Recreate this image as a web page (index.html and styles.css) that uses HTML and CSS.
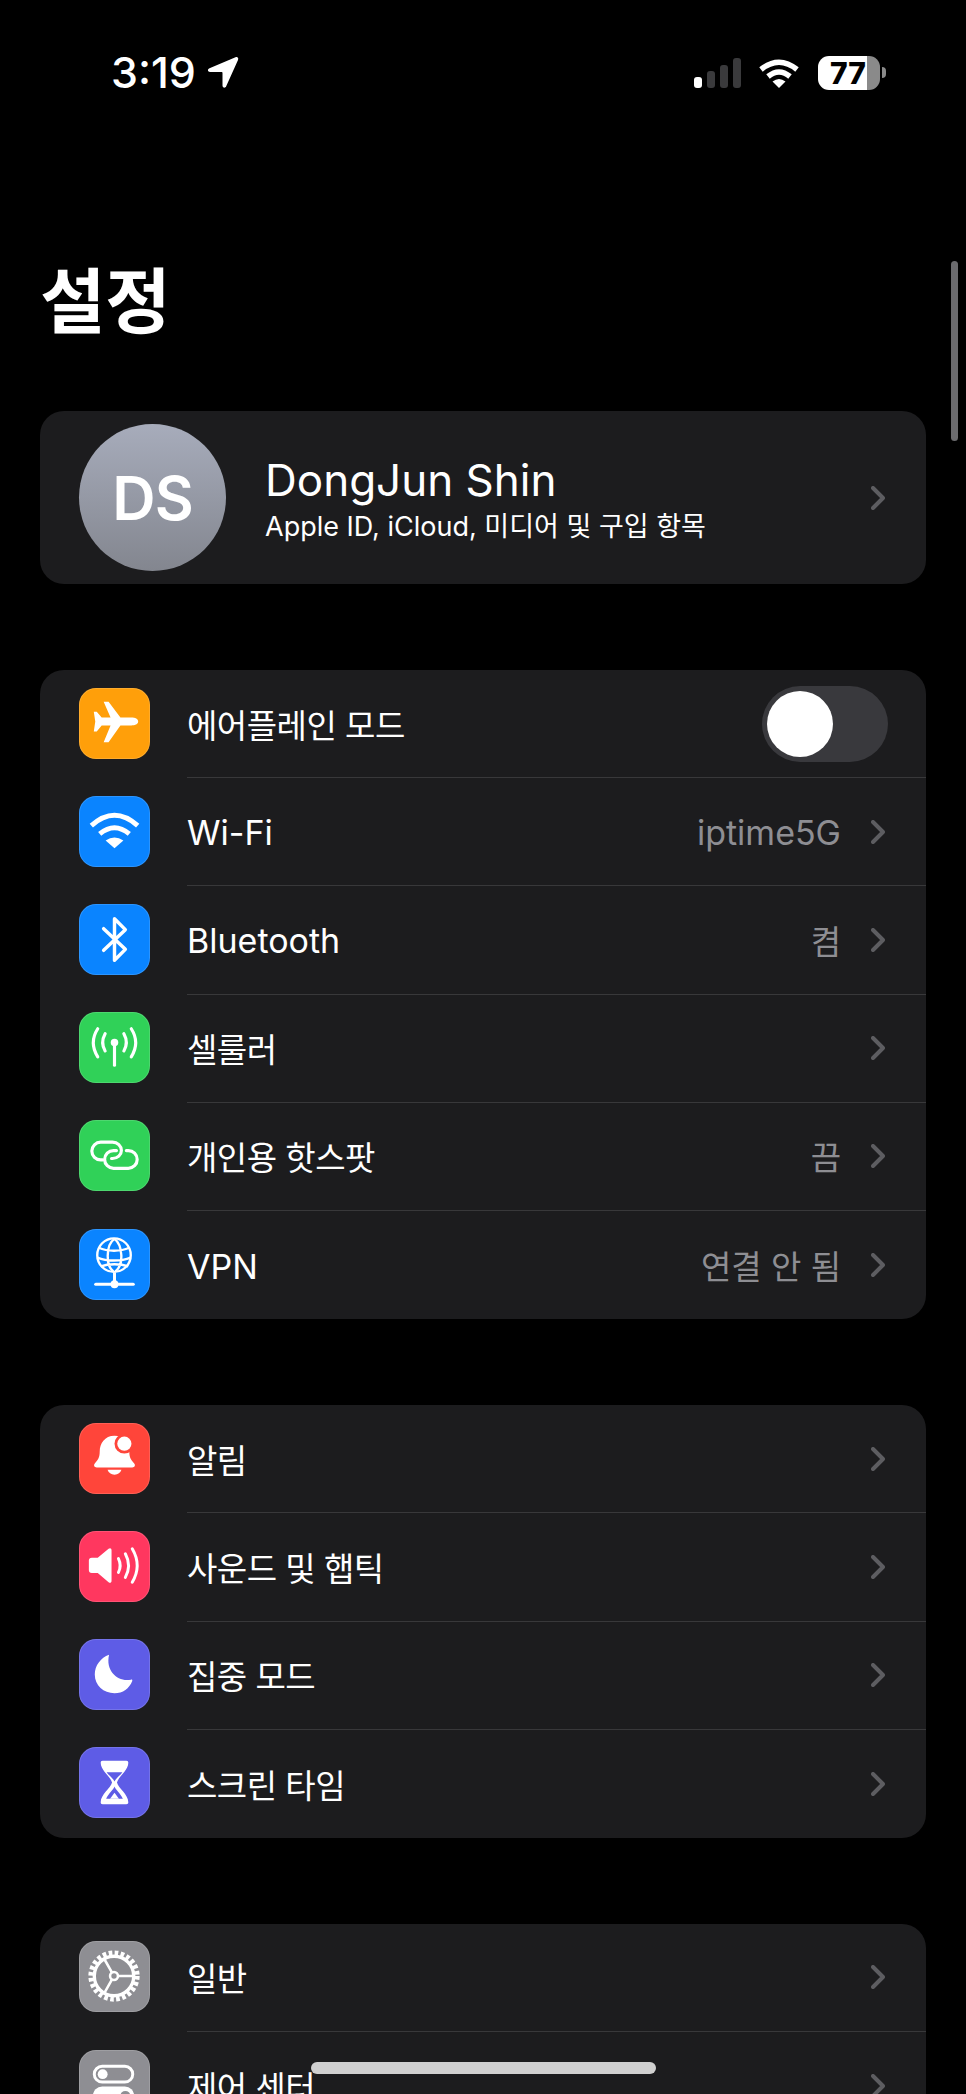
FILE: index.html
```html
<!DOCTYPE html>
<html lang="ko">
<head>
    <meta charset="UTF-8">
    <meta name="viewport" content="width=device-width, initial-scale=1.0">
    <title>설정</title>
    <link rel="stylesheet" href="styles.css">
</head>
<body>
    <div class="status-bar">
        <div class="status-left">
            <span class="time">3:19</span>
            <svg class="location" viewBox="0 0 32 33"><path d="M28.500 1.200 2.500 12.300c-2.400 1-1.800 3.700.5 3.700H14.500c.7 0 1 .3 1 1V29.500c0 2.400 2.700 3 3.700.7L31 4c.9-2-.6-3.600-2.500-2.800z" fill="#fff"/></svg>
        </div>
        <div class="status-right">
            <div class="signal">
                <span class="sig sig-1"></span>
                <span class="sig sig-2"></span>
                <span class="sig sig-3"></span>
                <span class="sig sig-4"></span>
            </div>
            <svg class="status-wifi" viewBox="0 0 42 30">
                <path d="M3 11.500Q21-3 39 11.500" fill="none" stroke="#fff" stroke-width="5.500"/>
                <path d="M10 18.500Q21 9.500 32 18.500" fill="none" stroke="#fff" stroke-width="5.500"/>
                <path d="M14.500 23.500Q21 18.500 27.500 23.500L21 30z" fill="#fff"/>
            </svg>
            <div class="battery"><span class="battery-text">77</span></div>
            <span class="battery-tip"></span>
        </div>
    </div>

    <h1 class="title">설정</h1>

    <div class="card profile">
        <div class="avatar">DS</div>
        <div class="profile-text">
            <div class="profile-name">DongJun Shin</div>
            <div class="profile-sub">Apple ID, iCloud, 미디어 및 구입 항목</div>
        </div>
        <svg class="chevron" viewBox="0 0 14 24"><path d="M2 2l10 10L2 22"/></svg>
    </div>

    <div class="card">
        <div class="row">
            <div class="icon orange">
                <svg viewBox="0 0 72 72"><path d="M60 34c0 2.500-3 4-7 4H42L30 55h-5l7-17h-9l-5 6h-3l1.500-10L15 24h3l5 6h9l-7-16h5l12 16h11c4 0 7 1.500 7 4z" fill="#fff"/></svg>
            </div>
            <div class="row-body">
                <span class="label ko">에어플레인 모드</span>
                <div class="toggle"><span class="knob"></span></div>
            </div>
        </div>
        <div class="row">
            <div class="icon blue">
                <svg viewBox="0 0 72 72" fill="none" stroke="#fff" stroke-width="5"><path d="M12.500 30Q36 9 59.500 30"/><path d="M21 38.500Q36 26 51 38.500"/><path d="M27 45Q36 39 45 45L36 53z" fill="#fff" stroke="none"/></svg>
            </div>
            <div class="row-body">
                <span class="label">Wi-Fi</span>
                <span class="value">iptime5G</span>
                <svg class="chevron" viewBox="0 0 14 24"><path d="M2 2l10 10L2 22"/></svg>
            </div>
        </div>
        <div class="row">
            <div class="icon blue">
                <svg viewBox="0 0 72 72" fill="none" stroke="#fff" stroke-width="3.500" stroke-linejoin="round" stroke-linecap="round"><path d="M25 25l22 21-11 11V15l11 11-22 21"/></svg>
            </div>
            <div class="row-body">
                <span class="label">Bluetooth</span>
                <span class="value ko">켬</span>
                <svg class="chevron" viewBox="0 0 14 24"><path d="M2 2l10 10L2 22"/></svg>
            </div>
        </div>
        <div class="row">
            <div class="icon green">
                <svg viewBox="0 0 72 72" fill="none" stroke="#fff" stroke-width="3.200" stroke-linecap="round"><circle cx="36" cy="31" r="3.800" fill="#fff" stroke="none"/><path d="M36 33v21"/><path d="M26.500 22q-5 9 0 17.500"/><path d="M45.500 22q5 9 0 17.500"/><path d="M19 17q-9 14 0 28.500"/><path d="M53 17q9 14 0 28.500"/></svg>
            </div>
            <div class="row-body">
                <span class="label ko">셀룰러</span>
                <svg class="chevron" viewBox="0 0 14 24"><path d="M2 2l10 10L2 22"/></svg>
            </div>
        </div>
        <div class="row">
            <div class="icon green">
                <svg viewBox="0 0 72 72" fill="none" stroke="#fff" stroke-width="3.200" stroke-linecap="round"><path d="M24 40.500h-2a9 9 0 0 1 0-18h12c5 0 9 4 9 8.500s-4 8-9 8h-1"/><path d="M48 31h2a9 9 0 0 1 0 18H35c-5 0-9-4-9-9s4-9 9-9h3"/></svg>
            </div>
            <div class="row-body">
                <span class="label ko">개인용 핫스팟</span>
                <span class="value ko">끔</span>
                <svg class="chevron" viewBox="0 0 14 24"><path d="M2 2l10 10L2 22"/></svg>
            </div>
        </div>
        <div class="row">
            <div class="icon blue">
                <svg viewBox="0 0 72 72" fill="none" stroke="#fff" stroke-width="2.400"><circle cx="35.500" cy="26.500" r="17"/><path d="M36 10c-9 6-9 28-1 33M36 10c8 6 10 26 1 33M20 19c9 4 22 4 31 0M18.500 29c10 4 24 4 34 0M22 38c8-3 20-3 28 0"/><path d="M36 44v12" stroke-width="3"/><path d="M17 56h38" stroke-width="3.200" stroke-linecap="round"/><circle cx="36" cy="56" r="4" fill="#fff" stroke="none"/></svg>
            </div>
            <div class="row-body">
                <span class="label">VPN</span>
                <span class="value ko">연결 안 됨</span>
                <svg class="chevron" viewBox="0 0 14 24"><path d="M2 2l10 10L2 22"/></svg>
            </div>
        </div>
    </div>

    <div class="card">
        <div class="row">
            <div class="icon red">
                <svg viewBox="0 0 72 72"><path d="M36 13c-10 0-15 8-15 16 0 6-1.500 8-5 12-1.500 1.700-.5 4 2 4h36c2.500 0 3.500-2.300 2-4-3.500-4-5-6-5-12 0-8-5-16-15-16z" fill="#fff"/><path d="M29 47.500h14c-.8 3-3.500 5-7 5s-6.200-2-7-5z" fill="#fff"/><circle cx="46" cy="21" r="10" fill="#ff453a"/><circle cx="46" cy="21" r="7.200" fill="#fff"/></svg>
            </div>
            <div class="row-body">
                <span class="label ko">알림</span>
                <svg class="chevron" viewBox="0 0 14 24"><path d="M2 2l10 10L2 22"/></svg>
            </div>
        </div>
        <div class="row">
            <div class="icon pink">
                <svg viewBox="0 0 72 72"><path d="M13 27h6l11-9c1.500-1.200 3-.5 3 1.500v31c0 2-1.500 2.700-3 1.500l-11-9.500h-6c-2 0-3-1-3-3V30c0-2 1-3 3-3z" fill="#fff"/><g fill="none" stroke="#fff" stroke-width="3" stroke-linecap="round"><path d="M40 28q3.500 7 0 14"/><path d="M47 23q6.500 12 0 24"/><path d="M54 18q10 17 0 34"/></g></svg>
            </div>
            <div class="row-body">
                <span class="label ko">사운드 및 햅틱</span>
                <svg class="chevron" viewBox="0 0 14 24"><path d="M2 2l10 10L2 22"/></svg>
            </div>
        </div>
        <div class="row">
            <div class="icon indigo">
                <svg viewBox="0 0 72 72"><path d="M30.500 16C22 19 16 27 16 36c0 11 9 19 20 19 8.500 0 15-5 18-12.500.3-1-.3-1.500-1.300-1.300C40 44 26.500 33 30.500 16z" fill="#fff"/></svg>
            </div>
            <div class="row-body">
                <span class="label ko">집중 모드</span>
                <svg class="chevron" viewBox="0 0 14 24"><path d="M2 2l10 10L2 22"/></svg>
            </div>
        </div>
        <div class="row">
            <div class="icon indigo">
                <svg viewBox="0 0 72 72"><path d="M24 14h24c1.500 0 2 .8 2 2 0 8-10 14-11.500 20C40 42 50 48 50 56c0 1.500-.8 2-2 2H24c-1.500 0-2-.8-2-2 0-8 10-14 11.500-20C32 30 22 24 22 16c0-1.200.5-2 2-2z" fill="#fff"/><path d="M28 25.500h16c-2 3-6.500 6-8 9.500-1.500-3.500-6-6.500-8-9.500z" fill="#5e5ce6"/><path d="M36 40c-1 3-6 7-8.500 12.500h17C42 47 37 43 36 40z" fill="#5e5ce6"/><path d="M36 46.500l-4.500 6h9z" fill="#fff"/></svg>
            </div>
            <div class="row-body">
                <span class="label ko">스크린 타임</span>
                <svg class="chevron" viewBox="0 0 14 24"><path d="M2 2l10 10L2 22"/></svg>
            </div>
        </div>
    </div>

    <div class="card">
        <div class="row">
            <div class="icon gray">
                <svg viewBox="0 0 72 72" fill="none" stroke="#fff"><circle cx="35.500" cy="35.500" r="23.500" stroke-width="5" stroke-dasharray="3.700 2.450"/><circle cx="35.500" cy="35.500" r="20" stroke-width="3.400"/><circle cx="35.500" cy="35.500" r="4" stroke-width="2.600"/><path d="M39.500 35.500h16M33.500 32l-8-14M33.500 39l-8 14" stroke-width="2.600"/></svg>
            </div>
            <div class="row-body">
                <span class="label ko">일반</span>
                <svg class="chevron" viewBox="0 0 14 24"><path d="M2 2l10 10L2 22"/></svg>
            </div>
        </div>
        <div class="row">
            <div class="icon gray">
                <svg viewBox="0 0 72 72"><rect x="15.500" y="16.500" width="39" height="16" rx="8" fill="none" stroke="#fff" stroke-width="3"/><circle cx="24" cy="24.500" r="5" fill="#fff"/><rect x="14" y="37" width="42" height="19" rx="9.500" fill="#fff"/><circle cx="47" cy="46.500" r="5" fill="#8e8e93"/></svg>
            </div>
            <div class="row-body">
                <span class="label ko">제어 센터</span>
                <svg class="chevron" viewBox="0 0 14 24"><path d="M2 2l10 10L2 22"/></svg>
            </div>
        </div>
    </div>

    <div class="scrollbar"></div>
    <div class="home-indicator"></div>
</body>
</html>
```

FILE: styles.css
```css
* {
    box-sizing: border-box;
    margin: 0;
    padding: 0;
}

html, body {
    width: 966px;
    height: 2094px;
    overflow: hidden;
}

body {
    position: relative;
    background-color: #000;
    color: #fff;
    font-family: Inter, 'Noto Sans CJK KR', sans-serif;
}

/* Status bar */
.status-bar {
    display: flex;
    justify-content: space-between;
    align-items: center;
    height: 35px;
    margin-top: 55px;
    padding: 0 80px 0 111px;
}

.status-left {
    display: flex;
    align-items: center;
    gap: 11px;
}

.time {
    font-size: 43px;
    font-weight: 500;
    line-height: 35px;
}

.location {
    width: 32px;
    height: 33px;
}

.status-right {
    display: flex;
    align-items: center;
}

.signal {
    display: flex;
    align-items: flex-end;
    gap: 5px;
    height: 30px;
    margin-right: 17px;
}

.sig {
    width: 8px;
    border-radius: 3px;
    background-color: #3a3a3c;
}

.sig-1 { height: 11px; background-color: #fff; }
.sig-2 { height: 17px; }
.sig-3 { height: 23px; }
.sig-4 { height: 30px; }

.status-wifi {
    width: 42px;
    height: 30px;
    margin-right: 18px;
}

.battery {
    width: 62px;
    height: 34px;
    border-radius: 11px;
    background: linear-gradient(to right, #fff 79%, #8a8a8a 79%);
    display: flex;
    align-items: center;
    padding-left: 12px;
}

.battery-text {
    color: #000;
    font-size: 30px;
    font-weight: 800;
    line-height: 34px;
}

.battery-tip {
    width: 4px;
    height: 11px;
    margin-left: 2px;
    border-radius: 0 4px 4px 0;
    background-color: #8a8a8a;
}

.title {
    margin: 164px 0 62px 40px;
    font-size: 71px;
    font-weight: 700;
    line-height: 95px;
}

/* Cards */
.card {
    width: 886px;
    margin: 0 0 86px 40px;
    border-radius: 24px;
    background-color: #1c1c1e;
    overflow: hidden;
}

.profile {
    display: flex;
    align-items: center;
    height: 173px;
    padding: 0 41px 0 39px;
}

.avatar {
    flex: none;
    display: flex;
    align-items: center;
    justify-content: center;
    width: 147px;
    height: 147px;
    border-radius: 50%;
    background: linear-gradient(to bottom, #a7acbb, #83868f);
    font-size: 60px;
    font-weight: 600;
    letter-spacing: -1px;
}

.profile-text {
    flex: 1;
    margin-left: 39px;
}

.profile-name {
    margin-top: 2px;
    font-size: 44px;
    line-height: 52px;
}

.profile-sub {
    margin-top: 4px;
    font-size: 27px;
    line-height: 34px;
}

.row {
    display: flex;
    align-items: center;
    height: 108.200px;
    padding-left: 39px;
}

.icon {
    flex: none;
    width: 71px;
    height: 71px;
    margin-bottom: 2px;
    border-radius: 17px;
    box-shadow: inset 0 0 0 1px rgba(255, 255, 255, 0.14);
}

.icon svg {
    display: block;
    width: 71px;
    height: 71px;
}

.orange { background-color: #ff9f0a; }
.blue { background-color: #0a84ff; }
.green { background-color: #30d158; }
.red { background-color: #ff453a; }
.pink { background-color: #ff375f; }
.indigo { background-color: #5e5ce6; }
.gray { background-color: #8e8e93; }

.row-body {
    flex: 1;
    display: flex;
    align-items: center;
    height: 100%;
    margin-left: 37px;
    padding-right: 41px;
    border-bottom: 1.500px solid #38383a;
}

.row:last-child .row-body {
    border-bottom: none;
}

.label {
    flex: 1;
    padding-top: 2px;
    font-size: 34px;
}

.value {
    margin-right: 30px;
    padding-top: 2px;
    font-size: 34px;
    color: #8e8e93;
}

/* Korean runs narrower than the Latin text in the same rows */
.ko {
    padding-top: 0;
    font-size: 33px;
    letter-spacing: -0.500px;
}

.value.ko {
    letter-spacing: 0;
}

.chevron {
    flex: none;
    width: 14px;
    height: 24px;
    fill: none;
    stroke: #5d5d61;
    stroke-width: 4;
    stroke-linecap: round;
    stroke-linejoin: round;
}

.toggle {
    width: 126px;
    height: 76px;
    margin-right: -3px;
    padding: 5px;
    border-radius: 38px;
    background-color: #39393d;
}

.knob {
    display: block;
    width: 66px;
    height: 66px;
    border-radius: 50%;
    background-color: #fff;
}

/* Overlays */
.scrollbar {
    position: absolute;
    top: 261px;
    left: 951px;
    width: 7px;
    height: 180px;
    border-radius: 4px;
    background-color: #6b6b6e;
}

.home-indicator {
    position: absolute;
    top: 2062px;
    left: 311px;
    width: 345px;
    height: 12px;
    border-radius: 6px;
    background-color: #d0d0d0;
}
```
